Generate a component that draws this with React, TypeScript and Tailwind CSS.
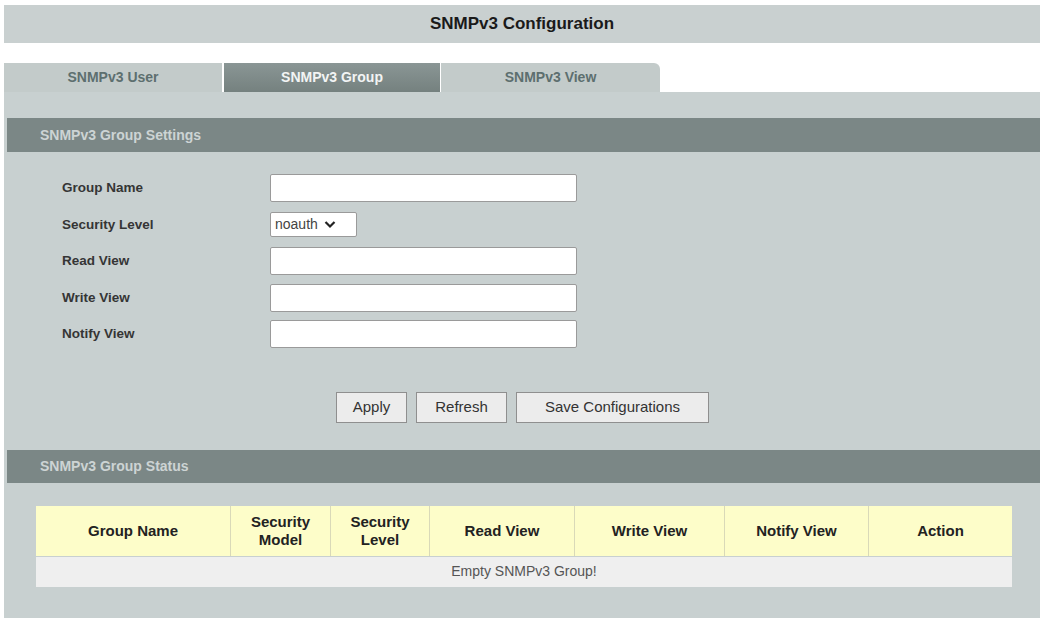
import React from "react";

const cols = [
  { w: "w-[194px]", label: ["Group Name"] },
  { w: "w-[100px]", label: ["Security", "Model"] },
  { w: "w-[99px]", label: ["Security", "Level"] },
  { w: "w-[145px]", label: ["Read View"] },
  { w: "w-[150px]", label: ["Write View"] },
  { w: "w-[144px]", label: ["Notify View"] },
  { w: "w-[144px]", label: ["Action"] },
];

function Row({ label, children }: { label: string; children: React.ReactNode }) {
  return (
    <div className="flex items-center h-[36.5px]">
      <div className="w-[266px] pl-[58px] text-[13.5px] font-bold text-[#353535]">{label}</div>
      {children}
    </div>
  );
}

function TextInput() {
  return <div className="w-[307px] h-[28px] bg-white border border-[#9a9a9a] rounded-[2px]" />;
}

export default function App() {
  return (
    <div
      className="w-[1040px] h-[618px] bg-white overflow-hidden"
      style={{ fontFamily: '"Liberation Sans", Arial, sans-serif' }}
    >
      <div className="ml-[4px] mt-[5px] h-[38px] bg-[#c9d0d0] flex items-center justify-center">
        <span className="text-[17px] font-bold text-[#1a1a1a]">SNMPv3 Configuration</span>
      </div>

      <div className="ml-[4px] mt-[20px] flex h-[29px]">
        <div className="w-[218px] bg-[#c3cbca] flex items-center justify-center text-[14px] font-bold text-[#5d6f6f]">
          SNMPv3 User
        </div>
        <div className="ml-[2px] w-[216px] bg-gradient-to-b from-[#8a9695] to-[#75817f] flex items-center justify-center text-[14px] font-bold text-[#f2f4f4]">
          SNMPv3 Group
        </div>
        <div className="ml-[1px] w-[219px] bg-[#c3cbca] rounded-tr-[6px] flex items-center justify-center text-[14px] font-bold text-[#5d6f6f]">
          SNMPv3 View
        </div>
      </div>

      <div className="ml-[4px] h-[526px] bg-[#c8d0d0] pt-[26px]">
        <div className="ml-[3px] h-[34px] bg-[#7b8786] flex items-center pl-[33px] text-[14px] font-bold text-[#cdd4d4]">
          SNMPv3 Group Settings
        </div>

        <div className="mt-[18px]">
          <Row label="Group Name">
            <TextInput />
          </Row>
          <Row label="Security Level">
            <div className="w-[87px] h-[25px] bg-white border border-[#9a9a9a] rounded-[2px] flex items-center pl-[4px] gap-[6px] text-[14px] text-[#444]">
              <span>noauth</span>
              <svg width="12" height="9" viewBox="0 0 12 9">
                <path d="M1.5 2 L6 6.5 L10.5 2" fill="none" stroke="#222" strokeWidth="2.2" />
              </svg>
            </div>
          </Row>
          <Row label="Read View">
            <TextInput />
          </Row>
          <Row label="Write View">
            <TextInput />
          </Row>
          <Row label="Notify View">
            <TextInput />
          </Row>
        </div>

        <div className="mt-[39px] flex pl-[332px] gap-[9px] h-[31px]">
          <button className="w-[71px] h-[31px] bg-[#ececec] border border-[#8f8f8f] text-[15px] text-[#333]">Apply</button>
          <button className="w-[91px] h-[31px] bg-[#ececec] border border-[#8f8f8f] text-[15px] text-[#333]">Refresh</button>
          <button className="w-[193px] h-[31px] bg-[#ececec] border border-[#8f8f8f] text-[15px] text-[#333]">Save Configurations</button>
        </div>

        <div className="mt-[27px] ml-[3px] h-[33px] bg-[#7b8786] flex items-center pl-[33px] text-[14px] font-bold text-[#cdd4d4]">
          SNMPv3 Group Status
        </div>

        <div className="mt-[23px] ml-[32px] w-[976px]">
          <div className="flex h-[50px] bg-[#fdfdc9]">
            {cols.map((c, i) => (
              <div
                key={i}
                className={`${c.w} flex flex-col items-center justify-center text-[15px] leading-[18px] font-bold text-[#222] ${i > 0 ? "border-l border-[#d9d9b8]" : ""}`}
              >
                {c.label.map((l, j) => (
                  <span key={j}>{l}</span>
                ))}
              </div>
            ))}
          </div>
          <div className="mt-[1px] h-[30px] bg-[#efefef] flex items-center justify-center text-[14px] text-[#555]">
            Empty SNMPv3 Group!
          </div>
        </div>
      </div>
    </div>
  );
}
